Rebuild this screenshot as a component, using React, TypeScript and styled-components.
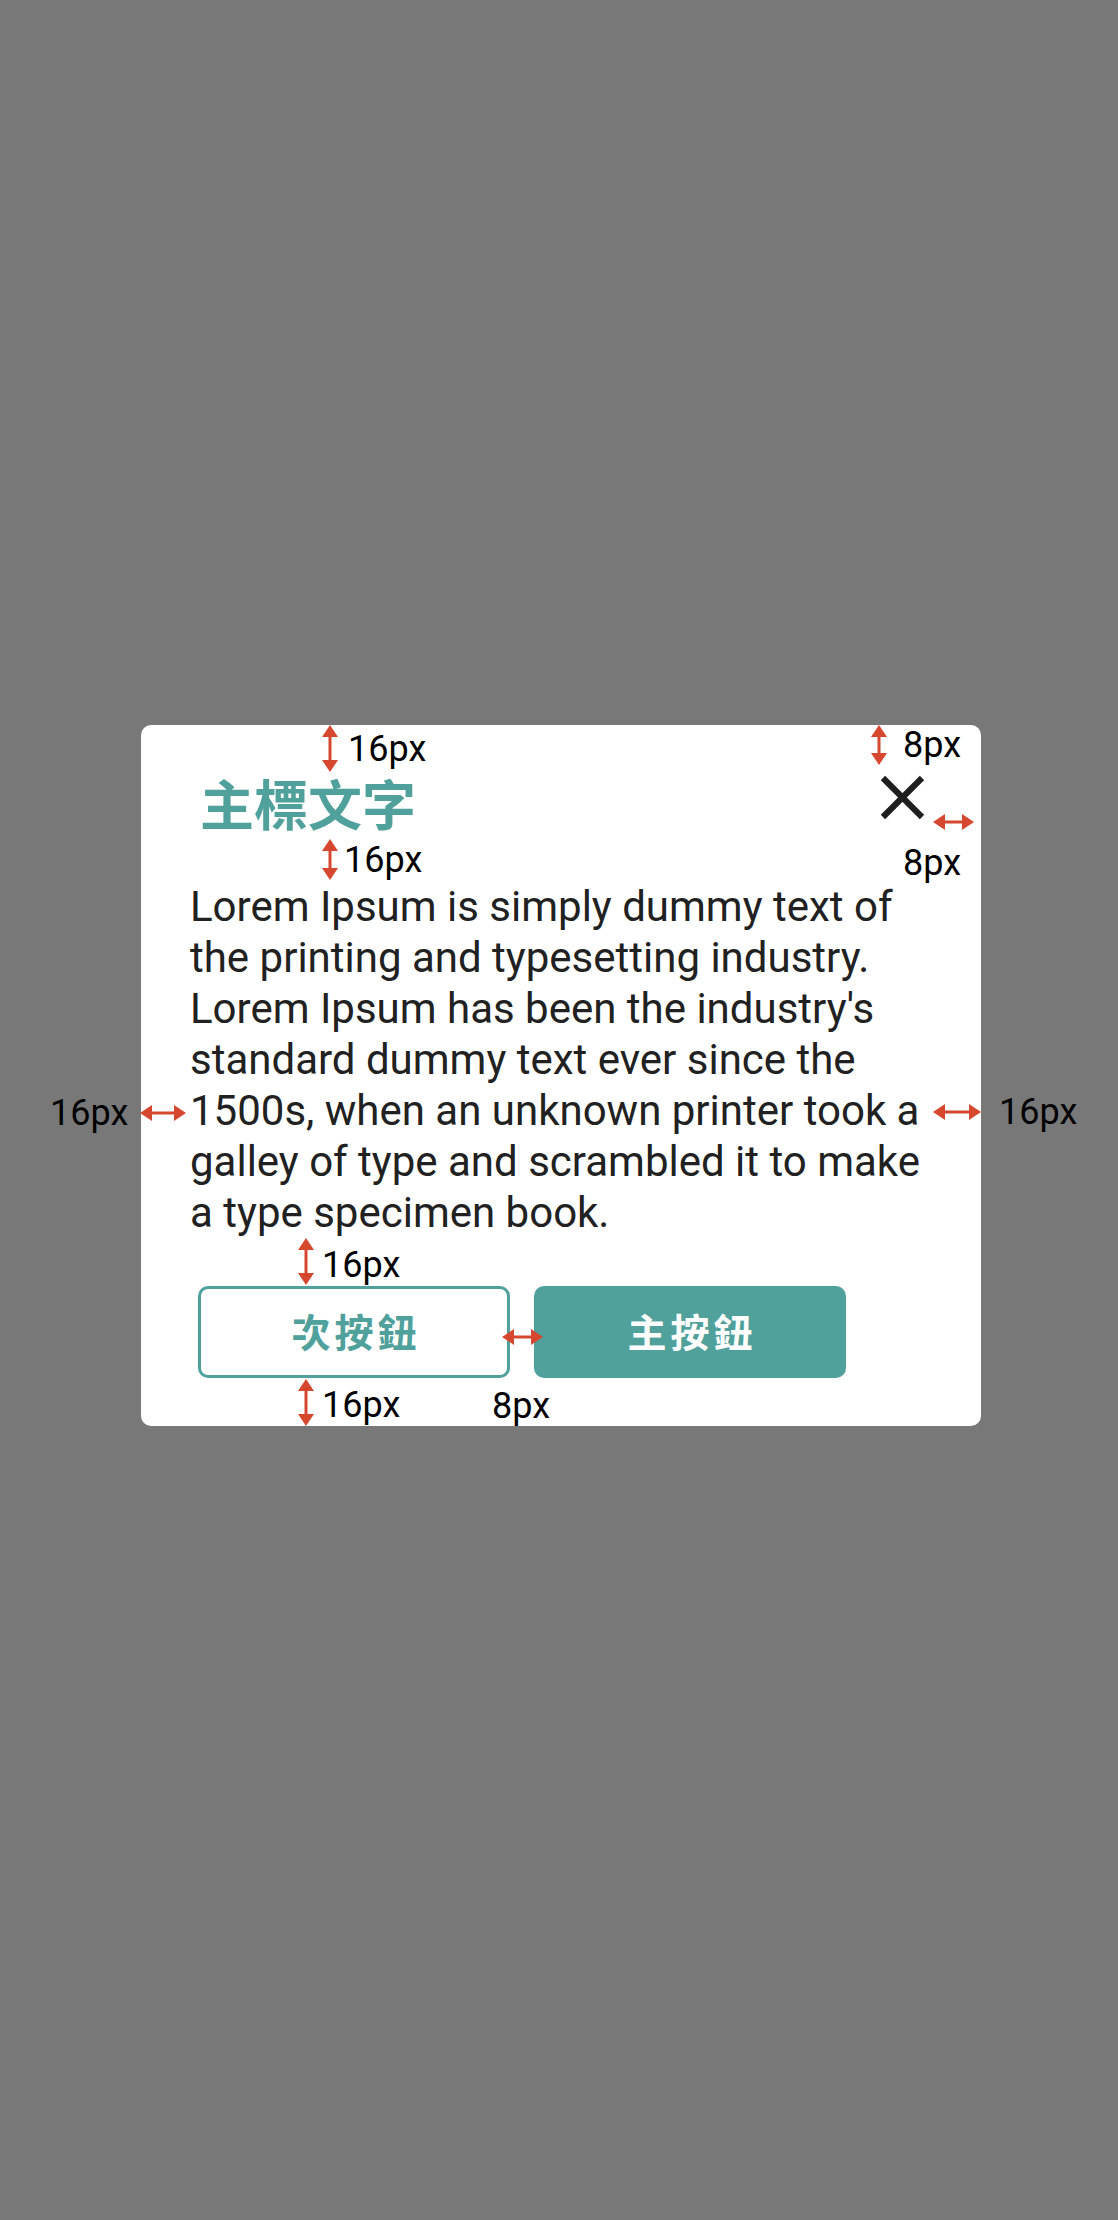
import React from "react";
import styled, { createGlobalStyle } from "styled-components";

const Global = createGlobalStyle`
  html, body { margin: 0; padding: 0; }
  body { background: #787878; font-family: Roboto, "Noto Sans CJK TC", sans-serif; }
`;

const TEAL = "#50a09b";
const RED = "#d6472f";

const Page = styled.div`
  position: relative;
  min-height: 2220px;
  box-sizing: border-box;
  padding: 725px 0 0 141px;
  background: #787878;
`;

const Card = styled.section`
  width: 840px;
  box-sizing: border-box;
  padding: 48px 49px;
  background: #ffffff;
  border-radius: 10px;
  display: flex;
  flex-direction: column;
`;

const Header = styled.header`
  display: flex;
  align-items: flex-start;
  justify-content: space-between;
  height: 60px;
`;

const Title = styled.h1`
  margin: 0 0 0 10px;
  font-family: "Noto Sans CJK TC", sans-serif;
  font-weight: 700;
  font-size: 54px;
  line-height: 60px;
  color: ${TEAL};
`;

const CloseButton = styled.button`
  border: 0;
  background: none;
  padding: 0;
  margin: -8px -3px 0 0;
  width: 65px;
  height: 65px;
  display: flex;
  svg { width: 65px; height: 65px; display: block; }
`;

const Body = styled.p`
  margin: 48px 0 0 0;
  font-family: Roboto, sans-serif;
  font-size: 42px;
  line-height: 51px;
  color: #212121;
`;

const Actions = styled.div`
  display: flex;
  gap: 24px;
  margin: 48px 0 0 8px;
`;

const Button = styled.button<{ $primary?: boolean }>`
  width: 312px;
  height: 92px;
  box-sizing: border-box;
  border-radius: 10px;
  border: 3px solid ${TEAL};
  background: ${(p) => (p.$primary ? TEAL : "#ffffff")};
  color: ${(p) => (p.$primary ? "#ffffff" : TEAL)};
  font-family: "Noto Sans CJK TC", sans-serif;
  font-weight: 700;
  font-size: 39px;
  letter-spacing: 4px;
  text-indent: 4px;
  display: flex;
  align-items: center;
  justify-content: center;
  padding: 0 0 5px 0;
`;

/* Spec annotations laid over the design */
const Annotation = styled.div<{ $x: number; $y: number; $gap?: number }>`
  position: absolute;
  left: ${(p) => p.$x}px;
  top: ${(p) => p.$y}px;
  display: flex;
  align-items: center;
  gap: ${(p) => p.$gap ?? 8}px;
`;

const Label = styled.span<{ $shift?: number }>`
  font-family: Roboto, sans-serif;
  font-size: 36px;
  line-height: 36px;
  color: #000;
  white-space: nowrap;
  margin-top: ${(p) => p.$shift ?? 0}px;
`;

const ArrowSvg = styled.svg`
  display: block;
  flex: none;
`;

const VArrow = ({ len }: { len: number }) => (
  <ArrowSvg width={18} height={len} viewBox={`0 0 18 ${len}`}>
    <rect x={7.5} y={10} width={3} height={len - 20} fill={RED} />
    <polygon points="9,0 17,12 1,12" fill={RED} />
    <polygon points={`9,${len} 17,${len - 12} 1,${len - 12}`} fill={RED} />
  </ArrowSvg>
);

const HArrow = ({ len }: { len: number }) => (
  <ArrowSvg width={len} height={18} viewBox={`0 0 ${len} 18`}>
    <rect x={10} y={7.5} width={len - 20} height={3} fill={RED} />
    <polygon points="0,9 12,1 12,17" fill={RED} />
    <polygon points={`${len},9 ${len - 12},1 ${len - 12},17`} fill={RED} />
  </ArrowSvg>
);

export default function App() {
  return (
    <Page>
      <Global />
      <Card>
        <Header>
          <Title>主標文字</Title>
          <CloseButton aria-label="close">
            <svg viewBox="0 0 24 24">
              <path
                d="M5.6 5.6L18.4 18.4M18.4 5.6L5.6 18.4"
                stroke="#1e1e1e"
                strokeWidth={2.3}
                strokeLinecap="square"
                fill="none"
              />
            </svg>
          </CloseButton>
        </Header>
        <Body>
          Lorem Ipsum is simply dummy text of the printing and typesetting
          industry. Lorem Ipsum has been the industry's standard dummy text
          ever since the 1500s, when an unknown printer took a galley of type
          and scrambled it to make a type specimen book.
        </Body>
        <Actions>
          <Button>次按鈕</Button>
          <Button $primary>主按鈕</Button>
        </Actions>
      </Card>

      <Annotation $x={321} $y={725} $gap={9}>
        <VArrow len={47} />
        <Label>16px</Label>
      </Annotation>
      <Annotation $x={321} $y={839} $gap={5}>
        <VArrow len={41} />
        <Label>16px</Label>
      </Annotation>
      <Annotation $x={870} $y={725} $gap={15}>
        <VArrow len={40} />
        <Label>8px</Label>
      </Annotation>
      <Annotation $x={933} $y={813}>
        <HArrow len={41} />
      </Annotation>
      <Annotation $x={903} $y={845}>
        <Label>8px</Label>
      </Annotation>
      <Annotation $x={50} $y={1095} $gap={12}>
        <Label>16px</Label>
        <HArrow len={46} />
      </Annotation>
      <Annotation $x={933} $y={1094} $gap={18}>
        <HArrow len={48} />
        <Label>16px</Label>
      </Annotation>
      <Annotation $x={297} $y={1238} $gap={7}>
        <VArrow len={47} />
        <Label $shift={6}>16px</Label>
      </Annotation>
      <Annotation $x={297} $y={1379} $gap={7}>
        <VArrow len={47} />
        <Label $shift={4}>16px</Label>
      </Annotation>
      <Annotation $x={502} $y={1328}>
        <HArrow len={41} />
      </Annotation>
      <Annotation $x={492} $y={1388}>
        <Label>8px</Label>
      </Annotation>
    </Page>
  );
}
